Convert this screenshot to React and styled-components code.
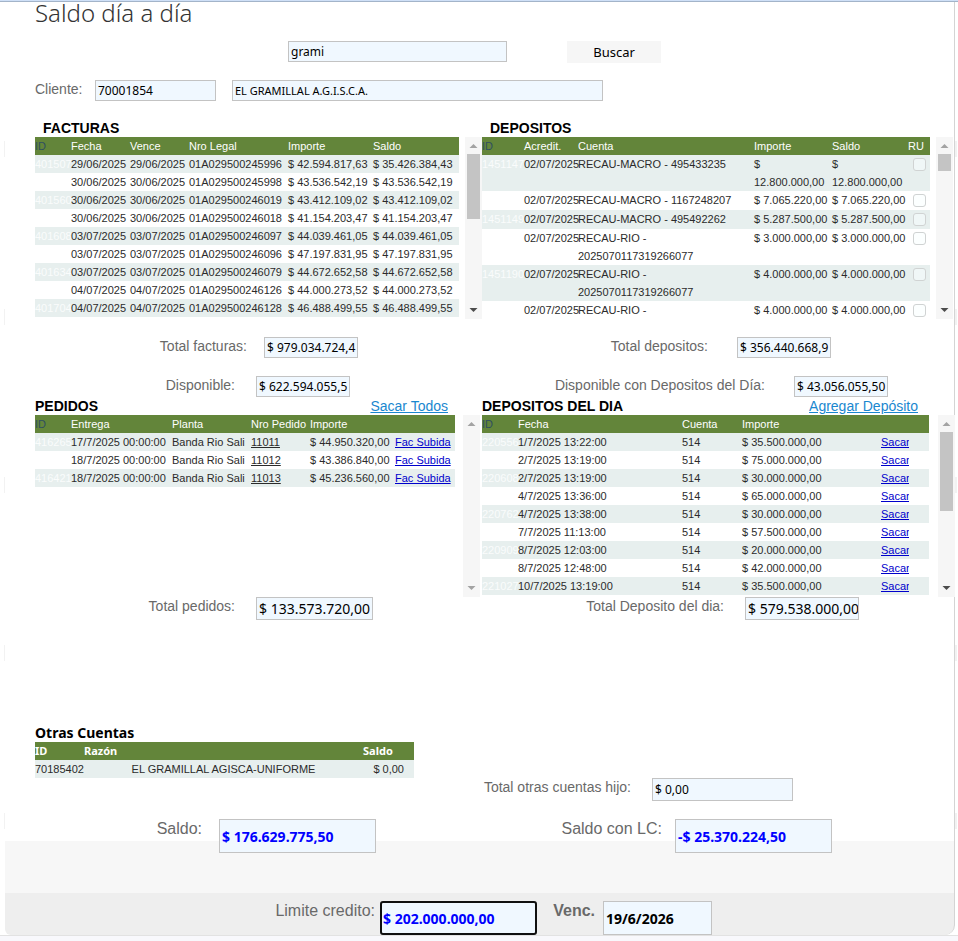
import React from "react";
import styled, { createGlobalStyle, css } from "styled-components";

const GlobalStyle = createGlobalStyle`
  * { box-sizing: border-box; }
  body {
    margin: 0;
    background: #f8f8fc;
    font-family: "Liberation Sans", Arial, sans-serif;
    color: #000;
  }
`;

const sans = `"Noto Sans", "Open Sans", sans-serif`;

const Shell = styled.div`
  border-top: 1px solid #cfe0f7;
`;

const Sheet = styled.div`
  border-top: 1px solid #a3b4c9;
  border-bottom: 1px solid #e2e2e2;
  background: #fff;
`;

const Frame = styled.div`
  margin: 0 1px 0 4px;
  padding: 0 2px 0 1px;
  background: repeating-linear-gradient(#fff 0 139px, #f2f2f2 139px 155px, #fff 155px 168px);
`;

const Panel = styled.main`
  padding-left: 30px;
  border-right: 1px solid #d4d4d4;
  border-bottom-right-radius: 10px;
  border-bottom-left-radius: 6px;
  background: linear-gradient(to top, #eeeeee 42px, #f7f7f7 42px, #f7f7f7 94px, #fff 94px);
`;

const Title = styled.h1`
  margin: 0;
  height: 39px;
  font: 300 24px/22px ${sans};
  color: #333;
`;

const Bar = styled.form`
  display: flex;
  align-items: flex-start;
  height: ${(p) => p.$h}px;
  padding-left: ${(p) => p.$indent || 0}px;
`;

const Columns = styled.div`
  display: grid;
  grid-template-columns: minmax(0, 447fr) minmax(0, 472fr);
`;

const Block = styled.section`
  min-width: 0;
`;

const Heading = styled.h2`
  margin: 0;
  padding-left: ${(p) => p.$indent || 0}px;
  font: bold 14px/18px ${(p) => (p.$alt ? sans : `"Liberation Sans", Arial, sans-serif`)};
`;

const HeadRow = styled.div`
  display: flex;
  justify-content: space-between;
  padding-right: ${(p) => p.$right}px;
`;

const ActionLink = styled.a`
  font-size: 14px;
  line-height: 18px;
  color: #1a87cf;
`;

const Field = styled.div`
  display: flex;
  align-items: flex-start;
  height: ${(p) => p.$h}px;
`;

const Label = styled.label`
  flex: none;
  width: ${(p) => p.$w}px;
  padding-right: ${(p) => p.$gap || 0}px;
  text-align: ${(p) => (p.$left ? "left" : "right")};
  font-size: ${(p) => (p.$big ? 16 : 14)}px;
  font-weight: ${(p) => (p.$bold ? "bold" : "normal")};
  line-height: ${(p) => (p.$big ? 20 : 18)}px;
  color: #696969;
  white-space: nowrap;
`;

const Box = styled.input`
  flex: none;
  width: ${(p) => p.$w}px;
  height: ${(p) => p.$h || 21}px;
  margin: 0;
  margin-right: ${(p) => p.$after || 0}px;
  padding: 0 0 0 2px;
  border: 1px solid #c3c3c3;
  border-radius: 0;
  background: #f0f8ff;
  font: ${(p) => (p.$bold ? "bold" : "normal")} ${(p) => p.$size || 12}px ${sans};
  color: ${(p) => p.$color || "#000"};
  outline: none;
  ${(p) =>
    p.$active &&
    css`
      border: 2px solid #101010;
      border-radius: 3px;
      padding-left: 1px;
    `}
`;

const Button = styled.button`
  width: 94px;
  height: 22px;
  margin-left: 60px;
  padding: 0;
  border: 0;
  background: #f6f6f6;
  font: 13px/20px ${sans};
  color: #000;
`;

const Pane = styled.div`
  display: flex;
  gap: ${(p) => p.$gap}px;
  height: 182px;
  overflow: hidden;
  margin-right: ${(p) => p.$right || 0}px;
`;

const View = styled.div`
  flex: 1;
  min-width: 0;
  overflow: hidden;
`;

const Table = styled.table`
  width: ${(p) => p.$w || "100%"};
  table-layout: fixed;
  border-collapse: collapse;
  font-size: 11px;
  line-height: 18px;
  color: #2b2b2b;

  th, td {
    padding: 0;
    height: 18px;
    text-align: left;
    vertical-align: top;
    white-space: nowrap;
    font-weight: normal;
  }
  th {
    background: #63853a;
    color: #fff;
  }
  th:first-child { color: #2f5060; }
  tbody tr:nth-child(odd) { background: #e7efee; }
  td:first-child { color: #fafcfc; }
`;

const PlainTable = styled(Table)`
  th { font-weight: bold; font-family: ${sans}; }
  th:first-child { color: #fff; }
  td:first-child { color: #2b2b2b; }
  td:nth-child(2) { text-align: center; }
  td:last-child { text-align: right; padding-right: 10px; }
`;

const RowLink = styled.a`
  color: ${(p) => (p.$dark ? "#2b2b2b" : "#0000cc")};
`;

const Clip = styled.span`
  display: block;
  width: 28px;
  overflow: hidden;
`;

const Check = styled.input`
  appearance: none;
  display: block;
  width: 13px;
  height: 13px;
  margin: 3px 0 3px 5px;
  border: 1px solid #d0d3d3;
  border-radius: 3px;
  background: rgba(250, 255, 255, 0.5);
`;

const Rail = styled.div`
  flex: none;
  width: 17px;
  display: flex;
  flex-direction: column;
  align-items: center;
  background: #f6f6f6;
`;

const Thumb = styled.div`
  width: 13px;
  height: ${(p) => p.$h}px;
  background: #c4c4c4;
`;

const Arrow = styled.svg`
  flex: none;
  display: block;
  width: 17px;
  height: 17px;
  fill: ${(p) => (p.$dark ? "#4c4c4c" : "#a3a3a3")};
`;

const Spring = styled.div`
  flex: 1;
`;

const Footer = styled.div`
  display: flex;
  align-items: flex-start;
  height: 34px;
`;

const Spacer = styled.div`
  height: ${(p) => p.$h}px;
`;

function Scrollbar({ thumb }) {
  return (
    <Rail aria-hidden="true">
      <Arrow viewBox="0 0 17 17"><path d="M4.500 11L8.500 7L12.500 11Z" /></Arrow>
      {thumb ? <Thumb $h={thumb} /> : null}
      <Spring />
      <Arrow viewBox="0 0 17 17" $dark={!!thumb}><path d="M4.500 6L8.500 10L12.500 6Z" /></Arrow>
    </Rail>
  );
}

function Grid({ as: T = Table, cols, heads, rows, width }) {
  return (
    <T $w={width}>
      <colgroup>
        {cols.map((w, i) => <col key={i} width={w || undefined} />)}
      </colgroup>
      <thead>
        <tr>{heads.map((h, i) => <th key={i} scope="col">{h}</th>)}</tr>
      </thead>
      <tbody>
        {rows.map((r, i) => (
          <tr key={i}>{r.map((c, j) => <td key={j}>{c}</td>)}</tr>
        ))}
      </tbody>
    </T>
  );
}

function LabeledBox({ id, label, row, w, gap, big, ...box }) {
  return (
    <Field $h={row}>
      <Label htmlFor={id} $w={w} $gap={gap} $big={big}>{label}</Label>
      <Box id={id} {...box} />
    </Field>
  );
}

const facturas = [
  ["401507", "29/06/2025", "29/06/2025", "01A029500245996", "$ 42.594.817,63", "$ 35.426.384,43"],
  ["", "30/06/2025", "30/06/2025", "01A029500245998", "$ 43.536.542,19", "$ 43.536.542,19"],
  ["401560", "30/06/2025", "30/06/2025", "01A029500246019", "$ 43.412.109,02", "$ 43.412.109,02"],
  ["", "30/06/2025", "30/06/2025", "01A029500246018", "$ 41.154.203,47", "$ 41.154.203,47"],
  ["401608", "03/07/2025", "03/07/2025", "01A029500246097", "$ 44.039.461,05", "$ 44.039.461,05"],
  ["", "03/07/2025", "03/07/2025", "01A029500246096", "$ 47.197.831,95", "$ 47.197.831,95"],
  ["401634", "03/07/2025", "03/07/2025", "01A029500246079", "$ 44.672.652,58", "$ 44.672.652,58"],
  ["", "04/07/2025", "04/07/2025", "01A029500246126", "$ 44.000.273,52", "$ 44.000.273,52"],
  ["401704", "04/07/2025", "04/07/2025", "01A029500246128", "$ 46.488.499,55", "$ 46.488.499,55"],
];

const lines = (a, b) => <>{a}<br />{b}</>;

const depositos = [
  ["1451147", "RECAU-MACRO - 495433235", lines("$", "12.800.000,00")],
  ["", "RECAU-MACRO - 1167248207", "$ 7.065.220,00"],
  ["1451149", "RECAU-MACRO - 495492262", "$ 5.287.500,00"],
  ["", lines("RECAU-RIO -", "2025070117319266077"), "$ 3.000.000,00"],
  ["1451190", lines("RECAU-RIO -", "2025070117319266077"), "$ 4.000.000,00"],
  ["", "RECAU-RIO -", "$ 4.000.000,00"],
].map(([id, cuenta, monto], i) => [
  id, "02/07/2025", cuenta, monto, monto,
  <Check key="c" type="checkbox" aria-label={`RU ${i + 1}`} />,
]);

const pedidos = [
  ["416265", "17/7/2025 00:00:00", "11011", "$ 44.950.320,00"],
  ["", "18/7/2025 00:00:00", "11012", "$ 43.386.840,00"],
  ["416421", "18/7/2025 00:00:00", "11013", "$ 45.236.560,00"],
].map(([id, entrega, nro, importe]) => [
  id, entrega, "Banda Rio Sali",
  <RowLink key="n" href="#" $dark>{nro}</RowLink>,
  importe,
  <RowLink key="f" href="#">Fac Subida</RowLink>,
]);

const delDia = [
  ["220556", "1/7/2025 13:22:00", "$ 35.500.000,00"],
  ["", "2/7/2025 13:19:00", "$ 75.000.000,00"],
  ["220608", "2/7/2025 13:19:00", "$ 30.000.000,00"],
  ["", "4/7/2025 13:36:00", "$ 65.000.000,00"],
  ["220762", "4/7/2025 13:38:00", "$ 30.000.000,00"],
  ["", "7/7/2025 11:13:00", "$ 57.500.000,00"],
  ["220909", "8/7/2025 12:03:00", "$ 20.000.000,00"],
  ["", "8/7/2025 12:48:00", "$ 42.000.000,00"],
  ["221027", "10/7/2025 13:19:00", "$ 35.500.000,00"],
].map(([id, fecha, importe]) => [
  id, fecha, "514", importe,
  <Clip key="s"><RowLink href="#">Sacar</RowLink></Clip>,
]);

export default function App() {
  return (
    <>
      <GlobalStyle />
      <Shell>
        <Sheet>
          <Frame>
            <Panel>
              <Title>Saldo día a día</Title>
              <Bar $h={39} $indent={253} onSubmit={(e) => e.preventDefault()}>
                <Box $w={219} defaultValue="grami" aria-label="Buscar cliente" />
                <Button type="submit">Buscar</Button>
              </Bar>
              <Bar as="div" $h={39}>
                <Label htmlFor="cliente" $w={60} $left>Cliente:</Label>
                <Box id="cliente" $w={121} $after={16} defaultValue="70001854" />
                <Box $w={371} $size={11} defaultValue="EL GRAMILLAL A.G.I.S.C.A." aria-label="Nombre del cliente" />
              </Bar>

              <Columns>
                <Block>
                  <Heading $indent={8}>FACTURAS</Heading>
                  <Pane $gap={6}>
                    <View>
                      <Grid cols={[36, 59, 59, 99, 85, 0]} heads={["ID", "Fecha", "Vence", "Nro Legal", "Importe", "Saldo"]} rows={facturas} />
                    </View>
                    <Scrollbar thumb={65} />
                  </Pane>
                </Block>
                <Block>
                  <Heading $indent={8}>DEPOSITOS</Heading>
                  <Pane $gap={6} $right={1}>
                    <View>
                      <Grid cols={[42, 54, 176, 78, 76, 0]} heads={["ID", "Acredit.", "Cuenta", "Importe", "Saldo", "RU"]} rows={depositos} />
                    </View>
                    <Scrollbar thumb={17} />
                  </Pane>
                </Block>
              </Columns>

              <Spacer $h={18} />
              <Columns>
                <Block>
                  <LabeledBox id="tf" label="Total facturas:" row={39} w={229} gap={17} $w={94} defaultValue="$ 979.034.724,4" />
                  <LabeledBox id="di" label="Disponible:" row={21} w={221} gap={21} $w={94} defaultValue="$ 622.594.055,5" />
                  <HeadRow $right={34}>
                    <Heading>PEDIDOS</Heading>
                    <ActionLink href="#">Sacar Todos</ActionLink>
                  </HeadRow>
                  <Pane $gap={8} $right={2}>
                    <View>
                      <Grid cols={[36, 101, 79, 59, 85, 0]} heads={["ID", "Entrega", "Planta", "Nro Pedido", "Importe", ""]} rows={pedidos} />
                    </View>
                    <Scrollbar />
                  </Pane>
                  <LabeledBox id="tp" label="Total pedidos:" row={127} w={221} gap={21} $w={117} $h={23} $size={14} defaultValue="$ 133.573.720,00" />
                </Block>
                <Block>
                  <LabeledBox id="td" label="Total depositos:" row={39} w={255} gap={29} $w={94} defaultValue="$ 356.440.668,9" />
                  <LabeledBox id="dd" label="Disponible con Depositos del Día:" row={21} w={312} gap={29} $w={94} defaultValue="$ 43.056.055,50" />
                  <HeadRow $right={36}>
                    <Heading>DEPOSITOS DEL DIA</Heading>
                    <ActionLink href="#">Agregar Depósito</ActionLink>
                  </HeadRow>
                  <Pane $gap={9} $right={-1}>
                    <View>
                      <Grid cols={[36, 164, 60, 139, 0]} heads={["ID", "Fecha", "Cuenta", "Importe", ""]} rows={delDia} />
                    </View>
                    <Scrollbar thumb={79} />
                  </Pane>
                  <LabeledBox id="tdd" label="Total Deposito del dia:" row={127} w={263} gap={21} $w={114} $h={23} $size={14} defaultValue="$ 579.538.000,00" />
                </Block>
              </Columns>

              <Columns>
                <Block>
                  <Heading $alt>Otras Cuentas</Heading>
                  <Grid as={PlainTable} width="379px" cols={[49, 279, 0]} heads={["ID", "Razón", "Saldo"]} rows={[["70185402", "EL GRAMILLAL AGISCA-UNIFORME", "$ 0,00"]]} />
                  <Spacer $h={41} />
                  <LabeledBox id="sa" label="Saldo:" big row={34} w={184} gap={17} $w={157} $h={34} $size={14} $bold $color="#0000ff" defaultValue="$ 176.629.775,50" />
                </Block>
                <Block>
                  <Spacer $h={54} />
                  <LabeledBox id="to" label="Total otras cuentas hijo:" row={41} w={170} gap={21} $w={141} $h={23} defaultValue="$ 0,00" />
                  <LabeledBox id="sl" label="Saldo con LC:" big row={34} w={193} gap={13} $w={157} $h={34} $size={14} $bold $color="#0000ff" defaultValue="-$ 25.370.224,50" />
                </Block>
              </Columns>

              <Spacer $h={48} />
              <Footer>
                <Label htmlFor="lc" $w={345} $gap={5} $big>Limite credito:</Label>
                <Box id="lc" $w={157} $h={34} $size={14} $bold $active $color="#0000ff" defaultValue="$ 202.000.000,00" />
                <Label htmlFor="ve" $w={66} $gap={8} $big $bold>Venc.</Label>
                <Box id="ve" $w={109} $h={34} $size={14} $bold defaultValue="19/6/2026" />
              </Footer>
            </Panel>
          </Frame>
        </Sheet>
      </Shell>
    </>
  );
}
